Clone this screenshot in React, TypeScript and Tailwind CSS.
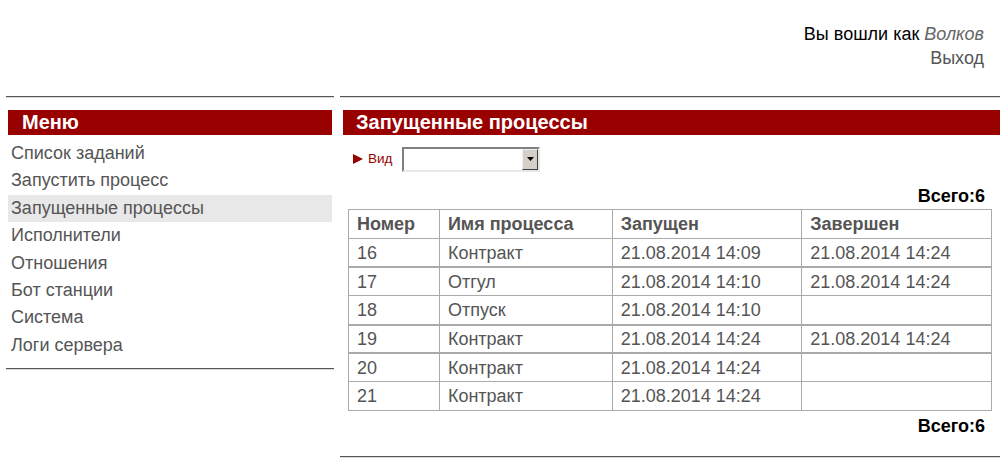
const menu = [
  "Список заданий",
  "Запустить процесс",
  "Запущенные процессы",
  "Исполнители",
  "Отношения",
  "Бот станции",
  "Система",
  "Логи сервера",
];

const rows = [
  ["16", "Контракт", "21.08.2014 14:09", "21.08.2014 14:24"],
  ["17", "Отгул", "21.08.2014 14:10", "21.08.2014 14:24"],
  ["18", "Отпуск", "21.08.2014 14:10", ""],
  ["19", "Контракт", "21.08.2014 14:24", "21.08.2014 14:24"],
  ["20", "Контракт", "21.08.2014 14:24", ""],
  ["21", "Контракт", "21.08.2014 14:24", ""],
];

const Rule = () => (
  <div className="border-t border-[#555] border-b border-b-[#dcdcdc]" />
);

export default function App() {
  return (
    <div
      className="w-[1000px] h-[465px] bg-white overflow-hidden text-[18px]"
      style={{ fontFamily: '"Liberation Sans", Arial, sans-serif' }}
    >
      {/* top-right user info */}
      <div className="h-[96px] pt-[23px] pr-[16px] text-right leading-[22px]">
        <div className="text-black">
          Вы вошли как <i className="text-[#666]">Волков</i>
        </div>
        <div className="text-[#555] mt-[2px]">Выход</div>
      </div>

      <div className="flex">
        {/* left menu */}
        <div className="ml-[6px] w-[328px]">
          <Rule />
          <div className="mt-[12px] mx-[2px] h-[25px] bg-[#990000] text-white font-bold text-[20px] leading-[25px] pl-[14px]">
            Меню
          </div>
          <div className="mt-[5px] mx-[2px]">
            {menu.map((m) => (
              <div
                key={m}
                className={
                  "h-[27.4px] leading-[27.4px] pl-[3px] text-[#555] " +
                  (m === "Запущенные процессы" ? "bg-[#e8e8e8]" : "")
                }
              >
                {m}
              </div>
            ))}
          </div>
          <div className="mt-[9px]">
            <Rule />
          </div>
        </div>

        {/* right content */}
        <div className="ml-[6px] flex-1">
          <Rule />
          <div className="mt-[12px] ml-[3px] h-[25px] bg-[#990000] text-white font-bold text-[20px] leading-[25px] pl-[13px]">
            Запущенные процессы
          </div>

          <div className="mt-[12px] flex items-center h-[24px] pl-[13px]">
            <svg width="10" height="10" viewBox="0 0 10 10" className="mr-[5px]">
              <polygon points="0,0 10,5 0,10" fill="#990000" />
            </svg>
            <span className="text-[#990000] text-[13.5px]">Вид</span>
            <div className="ml-[10px] w-[138px] h-[25px] flex border-2 border-t-[#808080] border-l-[#808080] border-b-[#e8e8e8] border-r-[#e8e8e8] bg-white">
              <div className="flex-1" />
              <div className="w-[16px] h-full bg-[#d4d0c8] border border-t-[#f0f0f0] border-l-[#f0f0f0] border-b-[#404040] border-r-[#404040] flex items-center justify-center">
                <svg width="7" height="4" viewBox="0 0 7 4">
                  <polygon points="0,0 7,0 3.5,4" fill="#000" />
                </svg>
              </div>
            </div>
          </div>

          <div className="mt-[15px] pr-[15px] text-right font-bold text-black leading-[20px]">
            Всего:6
          </div>

          <table className="ml-[8px] mt-[3px] w-[644px] border-collapse border border-[#aaa] text-[#555]">
            <thead>
              <tr className="h-[29px]">
                <th className="w-[91px] border border-[#aaa] text-left font-bold pl-[8px]">Номер</th>
                <th className="w-[173px] border border-[#aaa] text-left font-bold pl-[8px]">Имя процесса</th>
                <th className="w-[190px] border border-[#aaa] text-left font-bold pl-[8px]">Запущен</th>
                <th className="w-[190px] border border-[#aaa] text-left font-bold pl-[8px]">Завершен</th>
              </tr>
            </thead>
            <tbody>
              {rows.map((r, i) => (
                <tr key={r[0]} className={"h-[28.7px] " + (i === 1 || i === 3 || i === 4 ? "border-t-2 border-t-[#aaa]" : "")}>
                  {r.map((c, j) => (
                    <td key={j} className="border border-[#aaa] pl-[8px] py-0 leading-[20px]">
                      {c}
                    </td>
                  ))}
                </tr>
              ))}
            </tbody>
          </table>

          <div className="mt-[5px] pr-[15px] text-right font-bold text-black leading-[20px]">
            Всего:6
          </div>

          <div className="mt-[20px]">
            <Rule />
          </div>
        </div>
      </div>
    </div>
  );
}
